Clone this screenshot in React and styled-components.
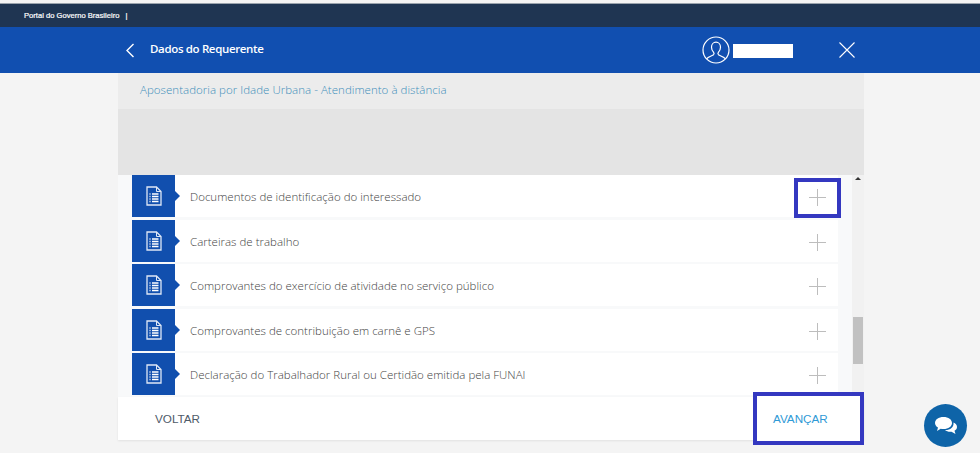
import React from "react";
import styled, { createGlobalStyle } from "styled-components";

const GlobalStyle = createGlobalStyle`
  html, body {
    margin: 0;
    height: 453px;
    overflow: hidden;
    background: #f4f4f4;
    font-family: "Open Sans", "Liberation Sans", sans-serif;
  }
`;

const Page = styled.div`
  position: relative;
  width: 980px;
  height: 453px;
  overflow: hidden;
  background: #f4f4f4;
`;
const GovBar = styled.div`
  height: 23px;
  margin-top: 3px;
  padding-left: 24px;
  display: flex;
  align-items: center;
  gap: 6px;
  background: #1f3552;
  border-top: 1px solid #9aa3ad;
  color: #fff;
  font: 7.6px "Liberation Sans", sans-serif;
  -webkit-text-stroke: 0.2px #fff;
`;
const Header = styled.header`
  height: 46px;
  display: flex;
  align-items: center;
  background: #114fb0;
  color: #fff;
`;
const BackButton = styled.div`
  display: flex;
  margin-left: 125px;
  width: 25px;
`;
const Title = styled.h1`
  flex: 1;
  margin: 0 0 4px;
  font-size: 11.5px;
  font-weight: 600;
  letter-spacing: -0.35px;
`;
const Avatar = styled.svg`
  margin-bottom: 1px;
`;
const UserName = styled.div`
  width: 60px;
  height: 14px;
  margin: 1px 46px 0 3px;
  background: #fff;
`;
const CloseButton = styled.div`
  display: flex;
  margin-right: 125px;
`;
const Panel = styled.main`
  width: 746px;
  margin-left: 118px;
  display: flex;
  flex-direction: column;
`;
const Subtitle = styled.div`
  height: 36px;
  padding: 0 0 4px 22px;
  box-sizing: border-box;
  display: flex;
  align-items: center;
  background: #ececec;
  color: #3f8fba;
  font-size: 11.5px;
  font-weight: 300;
  letter-spacing: 0.03px;
`;
const Banner = styled.div`
  height: 66px;
  background: #e4e4e4;
`;
const ScrollArea = styled.div`
  height: 222px;
  display: flex;
  background: #f8f9fa;
  overflow: hidden;
`;
const List = styled.div`
  width: 706px;
  margin-left: 14px;
  display: flex;
  flex-direction: column;
  gap: 2.5px;
`;
const Row = styled.div`
  height: 42px;
  flex: none;
  display: flex;
  align-items: center;
  background: #fff;
`;
const RowIcon = styled.div`
  position: relative;
  width: 43px;
  height: 42px;
  flex: none;
  display: flex;
  align-items: center;
  justify-content: center;
  background: #114fae;

  &::after {
    content: "";
    position: absolute;
    left: 43px;
    top: 16px;
    border-style: solid;
    border-width: 5px 0 5px 5px;
    border-color: transparent transparent transparent #114fae;
  }
`;
const RowLabel = styled.span`
  flex: 1;
  padding: 1px 0 0 15px;
  color: #444;
  font-size: 11.5px;
  font-weight: 300;
  letter-spacing: 0.01px;
`;
const AddButton = styled.div`
  width: 47px;
  height: 40px;
  margin: 3px -3px 0 0;
  box-sizing: border-box;
  display: flex;
  align-items: center;
  justify-content: center;
  border: 4px solid ${(p) => (p.$marked ? "#3438c0" : "transparent")};
  background: ${(p) => (p.$marked ? "#fff" : "transparent")};
  position: relative;
  z-index: 1;
`;
const Scrollbar = styled.div`
  position: relative;
  width: 12px;
  margin-left: 14px;
  background: #f1f1f1;
`;
const ScrollThumb = styled.div`
  position: absolute;
  top: 142px;
  left: 1px;
  width: 10px;
  height: 47px;
  background: #c1c1c1;
`;
const ScrollArrow = styled.div`
  position: absolute;
  left: 3px;
  ${(p) => (p.$down ? "bottom: 2px;" : "top: 2px;")}
  border-style: solid;
  border-color: transparent;
  border-width: ${(p) => (p.$down ? "3px 3px 0 3px" : "0 3px 3px 3px")};
  ${(p) => (p.$down ? "border-top-color: #444;" : "border-bottom-color: #333;")}
`;
const Footer = styled.footer`
  position: relative;
  height: 43px;
  display: flex;
  align-items: center;
  background: #fff;
  box-shadow: 0 1px 2px rgba(0, 0, 0, 0.08);
`;
const BackLink = styled.span`
  margin-left: 37px;
  color: #4e5a68;
  font: 11.7px "Liberation Sans", sans-serif;
`;
const NextLink = styled.div`
  position: absolute;
  right: 0;
  top: -5px;
  width: 111px;
  height: 53px;
  box-sizing: border-box;
  padding-left: 16px;
  display: flex;
  align-items: center;
  border: 4px solid #3438c0;
  background: #fff;
  color: #2f9ad6;
  font: 11.7px "Liberation Sans", sans-serif;
`;
const ChatButton = styled.div`
  position: absolute;
  left: 924px;
  top: 404px;
  width: 43px;
  height: 43px;
  border-radius: 50%;
  display: flex;
  align-items: center;
  justify-content: center;
  background: #0e64a8;
`;

const rows = [
  "Documentos de identificação do interessado",
  "Carteiras de trabalho",
  "Comprovantes do exercício de atividade no serviço público",
  "Comprovantes de contribuição em carnê e GPS",
  "Declaração do Trabalhador Rural ou Certidão emitida pela FUNAI",
];

const DocIcon = () => (
  <svg width="16" height="20" viewBox="0 0 16 20" fill="none" stroke="#dfe8f6">
    <path d="M1 1h9.5L15 5.500V19H1z" strokeWidth="1.300" />
    <path d="M10.5 1v4.500H15" strokeWidth="1" />
    <path d="M3.500 8h1M6 8h6.500M3.500 10.500h1M6 10.500h6.500M3.500 13h1M6 13h6.500M3.500 15.500h1M6 15.500h6.500" stroke="#fff" strokeWidth="1.300" />
  </svg>
);

const PlusIcon = () => (
  <svg width="17" height="17" viewBox="0 0 17 17" stroke="#bdbdbd" strokeWidth="1">
    <path d="M8.500 0v17M0 8.500h17" />
  </svg>
);

const App = () => {
  return (
    <Page>
      <GlobalStyle />
      <GovBar>
        <span>Portal do Governo Brasileiro</span>
        <span>|</span>
      </GovBar>
      <Header>
        <BackButton>
          <svg width="10" height="15" viewBox="0 0 10 15" fill="none" stroke="#fff" strokeWidth="1.400">
            <path d="M8.500 1L2 7.500 8.500 14" />
          </svg>
        </BackButton>
        <Title>Dados do Requerente</Title>
        <Avatar width="28" height="28" viewBox="0 0 28 28" fill="none" stroke="#fff" strokeWidth="1.200">
          <circle cx="14" cy="14" r="13" />
          <path d="M4.500 23c1.500-2.500 5.500-3 7-4.200.8-.7.6-1.800 0-2.600-1.300-1.500-2-3-2-5 0-3 2-5 4.500-5s4.500 2 4.500 5c0 2-.7 3.500-2 5-.6.8-.8 1.900 0 2.600 1.500 1.200 5.500 1.700 7 4.200" />
        </Avatar>
        <UserName />
        <CloseButton>
          <svg width="16" height="16" viewBox="0 0 16 16" stroke="#fff" strokeWidth="1.100">
            <path d="M.5.500l15 15M15.500.500l-15 15" />
          </svg>
        </CloseButton>
      </Header>
      <Panel>
        <Subtitle>Aposentadoria por Idade Urbana - Atendimento à distância</Subtitle>
        <Banner />
        <ScrollArea>
          <List>
            {rows.map((label, i) => (
              <Row key={label}>
                <RowIcon>
                  <DocIcon />
                </RowIcon>
                <RowLabel>{label}</RowLabel>
                <AddButton $marked={i === 0}>
                  <PlusIcon />
                </AddButton>
              </Row>
            ))}
          </List>
          <Scrollbar>
            <ScrollArrow />
            <ScrollThumb />
            <ScrollArrow $down />
          </Scrollbar>
        </ScrollArea>
        <Footer>
          <BackLink>VOLTAR</BackLink>
          <NextLink>AVANÇAR</NextLink>
        </Footer>
      </Panel>
      <ChatButton>
        <svg width="24" height="20" viewBox="0 0 24 20" fill="#fff">
          <path d="M9.500 1C14.500 1 18 3.600 18 7s-3.500 6-8.500 6c-1 0-2-.1-2.800-.3L3 15l1-3.500C2.200 10.500 1 8.900 1 7c0-3.400 3.500-6 8.500-6z" />
          <path d="M19.500 6.500c2 .9 3.500 2.500 3.500 4.500 0 1.700-1 3-2.500 3.800L21.500 18l-4-2.300c-2.700.3-5-.3-6.500-1.700 5 .2 9-2.500 8.500-7.500z" />
        </svg>
      </ChatButton>
    </Page>
  );
};

export default App;
